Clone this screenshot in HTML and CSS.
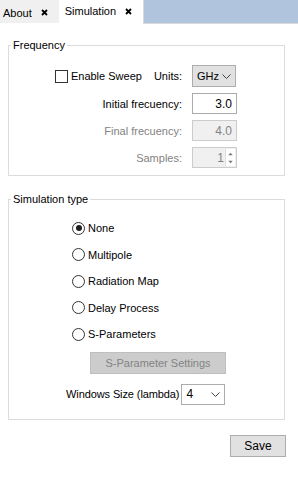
FILE: index.html
```html
<!DOCTYPE html>
<html lang="en">
<head>
  <meta charset="UTF-8">
  <title>Simulation</title>
  <link rel="stylesheet" href="styles.css">
</head>
<body>
<div class="tabs">
  <div class="tab">About <svg class="close" width="7" height="7" viewBox="0 0 7 7"><path d="M1 1L6 6M6 1L1 6" stroke="#000" stroke-width="1.8"/></svg></div>
  <div class="tab active">Simulation <svg class="close" width="7" height="7" viewBox="0 0 7 7"><path d="M1 1L6 6M6 1L1 6" stroke="#000" stroke-width="1.8"/></svg></div>
  <div class="tab-fill"></div>
</div>

<div class="page">
  <fieldset class="group freq">
    <legend>Frequency</legend>
    <div class="row">
      <div class="label sweep">
        <span class="check"></span>
        <span>Enable Sweep</span>
        <span class="units">Units:</span>
      </div>
      <div class="combo gray">GHz <svg width="9" height="5" viewBox="0 0 9 5"><path d="M0.5 0.5L4.5 4.5L8.5 0.5" fill="none" stroke="#444"/></svg></div>
    </div>
    <div class="row">
      <div class="label">Initial frecuency:</div>
      <div class="field">3.0</div>
    </div>
    <div class="row">
      <div class="label disabled">Final frecuency:</div>
      <div class="field off">4.0</div>
    </div>
    <div class="row">
      <div class="label disabled">Samples:</div>
      <div class="field off spin">
        <span class="spin-val">1</span>
        <span class="spin-btns">
          <svg width="9" height="9" viewBox="0 0 9 9"><path d="M2 6L4.5 3L7 6Z" fill="#777"/></svg>
          <svg width="9" height="9" viewBox="0 0 9 9"><path d="M2 3L4.5 6L7 3Z" fill="#777"/></svg>
        </span>
      </div>
    </div>
  </fieldset>

  <fieldset class="group sim">
    <legend>Simulation type</legend>
    <div class="radios">
      <div class="radio-row"><span class="radio on"></span>None</div>
      <div class="radio-row"><span class="radio"></span>Multipole</div>
      <div class="radio-row"><span class="radio"></span>Radiation Map</div>
      <div class="radio-row"><span class="radio"></span>Delay Process</div>
      <div class="radio-row"><span class="radio"></span>S-Parameters</div>
    </div>
    <div class="sparam">S-Parameter Settings</div>
    <div class="wsize">
      <span>Windows Size (lambda)</span>
      <div class="combo white">4 <svg width="9" height="5" viewBox="0 0 9 5"><path d="M0.5 0.5L4.5 4.5L8.5 0.5" fill="none" stroke="#444"/></svg></div>
    </div>
  </fieldset>

  <div class="actions">
    <div class="btn">Save</div>
  </div>
</div>
</body>
</html>
```

FILE: styles.css
```css
body {
  margin: 0;
  background-color: #FFFFFF;
  color: #000000;
  font-family: "Liberation Sans", Arial, sans-serif;
  font-size: 11px;
}
.tabs {
  display: flex;
  height: 24px;
}
.tab {
  display: flex;
  align-items: center;
  gap: 9px;
  height: 23px;
  padding: 2px 11px 0 3px;
  box-sizing: border-box;
  background-color: #F0F0F0;
  font-size: 11px;
}
.tab.active {
  background-color: #FFFFFF;
  height: 24px;
  padding: 0 11px 2px 6px;
}
.tab-fill {
  flex: 1;
  height: 23px;
  background-color: #B0C4DE;
  border-left: 1px solid #D9D9D9;
  border-bottom: 1px solid #D9D9D9;
}
.page {
  padding: 15px 13px 0 8px;
}
.group {
  margin: 0;
  padding: 0;
  border: 1px solid #DCDCDC;
  min-width: 0;
}
.group legend {
  padding: 0 2px;
  margin-left: 2px;
  line-height: 13px;
}
.freq {
  padding: 13px 0 7px 0;
}
.row {
  display: flex;
  align-items: center;
  margin-bottom: 6px;
  height: 21px;
}
.row:first-of-type {
  height: 22px;
}
.row:last-child {
  margin-bottom: 0;
}
.label {
  width: 173px;
  text-align: right;
  margin-right: 10px;
}
.label.disabled {
  color: #838383;
}
.sweep {
  display: flex;
  align-items: center;
  justify-content: flex-end;
}
.check {
  width: 13px;
  height: 13px;
  box-sizing: border-box;
  border: 1px solid #333333;
  background: #FFFFFF;
  margin-right: 3px;
}
.units {
  margin-left: 12px;
}
.combo {
  display: flex;
  align-items: center;
  justify-content: space-between;
  width: 44px;
  height: 22px;
  box-sizing: border-box;
  padding: 0 4px 0 4px;
  border: 1px solid #ADADAD;
}
.combo.gray {
  background-color: #E1E1E1;
}
.combo.white {
  background-color: #FFFFFF;
  height: 21px;
  padding-left: 4px;
  font-size: 12px;
}
.field {
  width: 45px;
  height: 21px;
  box-sizing: border-box;
  border: 1px solid #ABABAB;
  text-align: right;
  padding: 3px 4px 0 0;
  font-size: 12px;
}
.field.off {
  background-color: #F0F0F0;
  border-color: #CCCCCC;
  color: #838383;
}
.spin {
  display: flex;
  justify-content: flex-end;
  align-items: center;
  padding: 1px;
}
.spin-val {
  margin-right: 1px;
  padding-top: 1px;
}
.spin-btns {
  display: flex;
  flex-direction: column;
  background-color: #FFFFFF;
  border-left: 1px solid #E0E0E0;
  height: 17px;
  justify-content: center;
}
.spin-btns svg {
  display: block;
  height: 8px;
}
.sim {
  margin-top: 17px;
  padding: 15px 0 14px 0;
}
.radios {
  padding-left: 63px;
}
.radio-row {
  display: flex;
  align-items: center;
  gap: 3px;
  height: 14px;
  margin-bottom: 12.5px;
}
.radio {
  width: 13px;
  height: 13px;
  box-sizing: border-box;
  border: 1px solid #333333;
  border-radius: 50%;
  background: #FFFFFF;
  position: relative;
}
.radio.on::after {
  content: "";
  position: absolute;
  left: 2.5px;
  top: 2.5px;
  width: 6px;
  height: 6px;
  border-radius: 50%;
  background: #1E1E1E;
}
.sparam {
  margin: -2px 0 0 81px;
  width: 136px;
  height: 22px;
  box-sizing: border-box;
  background-color: #CCCCCC;
  border: 1px solid #BFBFBF;
  color: #838383;
  display: flex;
  align-items: center;
  justify-content: center;
}
.wsize {
  display: flex;
  align-items: center;
  gap: 2px;
  margin: 10px 0 0 57px;
  letter-spacing: -0.1px;
}
.actions {
  display: flex;
  justify-content: flex-end;
  padding: 15px 0 0 0;
  margin-right: -1px;
}
.btn {
  width: 56px;
  height: 22px;
  box-sizing: border-box;
  background-color: #E1E1E1;
  border: 1px solid #ADADAD;
  display: flex;
  align-items: center;
  justify-content: center;
  font-size: 12px;
}
```
